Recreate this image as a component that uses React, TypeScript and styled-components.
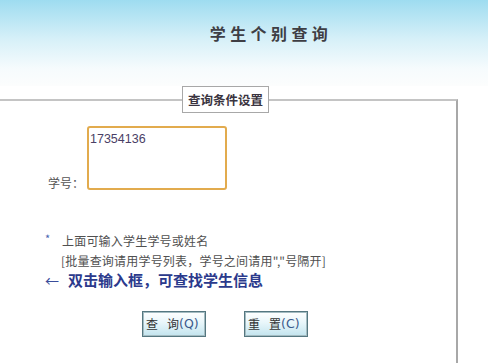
import React from "react";
import styled, { createGlobalStyle } from "styled-components";

const GlobalStyle = createGlobalStyle`
  html, body {
    margin: 0;
    padding: 0;
    background: #ffffff;
    overflow: hidden;
  }
  body {
    font-family: "Liberation Sans", "Noto Sans CJK SC", sans-serif;
    font-size: 12px;
    color: #444;
  }
`;

const Page = styled.div`
  width: 488px;
  height: 363px;
  overflow: hidden;
`;

const Header = styled.div`
  height: 86px;
  background: linear-gradient(to bottom, #9edcf0 0%, #d6f0f8 45%, #f6fbfd 80%, #fcfdfd 100%);
  padding-top: 22px;
  box-sizing: border-box;
`;

const Title = styled.h1`
  margin: 0;
  padding-left: 54px;
  text-align: center;
  font-family: "Noto Sans CJK SC", sans-serif;
  font-size: 16px;
  line-height: 22px;
  font-weight: 700;
  letter-spacing: 4.4px;
  color: #3e3e44;
`;

const Box = styled.fieldset`
  margin: 0 30px 0 -10px;
  padding: 0 0 0 57px;
  height: 320px;
  border: 1px solid #b8b8b8;
  border-right: 2px solid #a8a8a8;
  border-top: 2px solid #c4c4c4;
  background: #ffffff;
`;

const Legend = styled.legend`
  margin-left: 134px;
  padding: 3px 5px;
  border: 1px solid #a8a8a8;
  background: #ffffff;
  font-family: "Noto Sans CJK SC", sans-serif;
  font-size: 12.5px;
  line-height: 19px;
  font-weight: 700;
  color: #3a3440;
`;

const FormRow = styled.div`
  display: flex;
  align-items: flex-end;
  margin-top: 13px;
`;

const Label = styled.label`
  width: 39px;
  font-family: "Noto Sans CJK SC", sans-serif;
  font-size: 12px;
  line-height: 15px;
  color: #555;
`;

const Input = styled.textarea`
  box-sizing: border-box;
  width: 140px;
  height: 64px;
  margin: 0;
  padding: 4px 1px;
  border: 2px solid #e2ab4e;
  border-radius: 3px;
  outline: none;
  resize: none;
  font-family: "Liberation Sans", sans-serif;
  font-size: 12.5px;
  line-height: 15px;
  color: #4a3f66;
`;

const Notes = styled.div`
  margin-top: 41px;
  margin-left: -3px;
  font-family: "Noto Sans CJK SC", sans-serif;
`;

const NoteLine = styled.div<{ $indent?: boolean }>`
  display: flex;
  padding-left: ${(p) => (p.$indent ? "16px" : "0")};
  font-size: 12px;
  line-height: 20px;
  color: #505050;
  letter-spacing: 0.2px;
`;

const Mark = styled.span`
  width: 17px;
  color: #4a62b0;
  font-size: 11px;
  line-height: 14px;
`;

const Tip = styled.div`
  display: flex;
  font-size: 15px;
  line-height: 18px;
  font-weight: 700;
  color: #2b3a8c;
`;

const Arrow = styled.span`
  width: 23px;
  font-size: 14px;
  font-weight: 400;
  color: #3a4c9a;
`;

const Buttons = styled.div`
  display: flex;
  gap: 38px;
  margin-top: 22px;
  padding-left: 94px;
`;

const Button = styled.button`
  box-sizing: border-box;
  display: flex;
  align-items: center;
  width: 64px;
  height: 26px;
  padding: 0 0 0 3px;
  border: 1px solid #557780;
  box-shadow: inset 0 0 0 1px #a4bcc2;
  background: linear-gradient(to bottom, #ffffff 0%, #e8f6fa 45%, #c2e4ee 100%);
  font-family: "Noto Sans CJK SC", sans-serif;
  font-size: 12px;
  line-height: 24px;
  color: #333;
  cursor: pointer;
`;

const Gap = styled.span`
  display: inline-block;
  width: 9px;
`;

const Key = styled.span`
  font-family: "DejaVu Sans", sans-serif;
  font-size: 12.5px;
  color: #3a5a8c;
`;

export default function App() {
  return (
    <Page>
      <GlobalStyle />
      <Header>
        <Title>学生个别查询</Title>
      </Header>
      <Box>
        <Legend>查询条件设置</Legend>
        <FormRow>
          <Label>学号：</Label>
          <Input defaultValue="17354136" />
        </FormRow>
        <Notes>
          <NoteLine>
            <Mark>*</Mark>
            <span>上面可输入学生学号或姓名</span>
          </NoteLine>
          <NoteLine $indent>[批量查询请用学号列表，学号之间请用","号隔开]</NoteLine>
          <Tip>
            <Arrow>←</Arrow>
            <span>双击输入框，可查找学生信息</span>
          </Tip>
        </Notes>
        <Buttons>
          <Button>
            查<Gap />询<Key>(Q)</Key>
          </Button>
          <Button>
            重<Gap />置<Key>(C)</Key>
          </Button>
        </Buttons>
      </Box>
    </Page>
  );
}
